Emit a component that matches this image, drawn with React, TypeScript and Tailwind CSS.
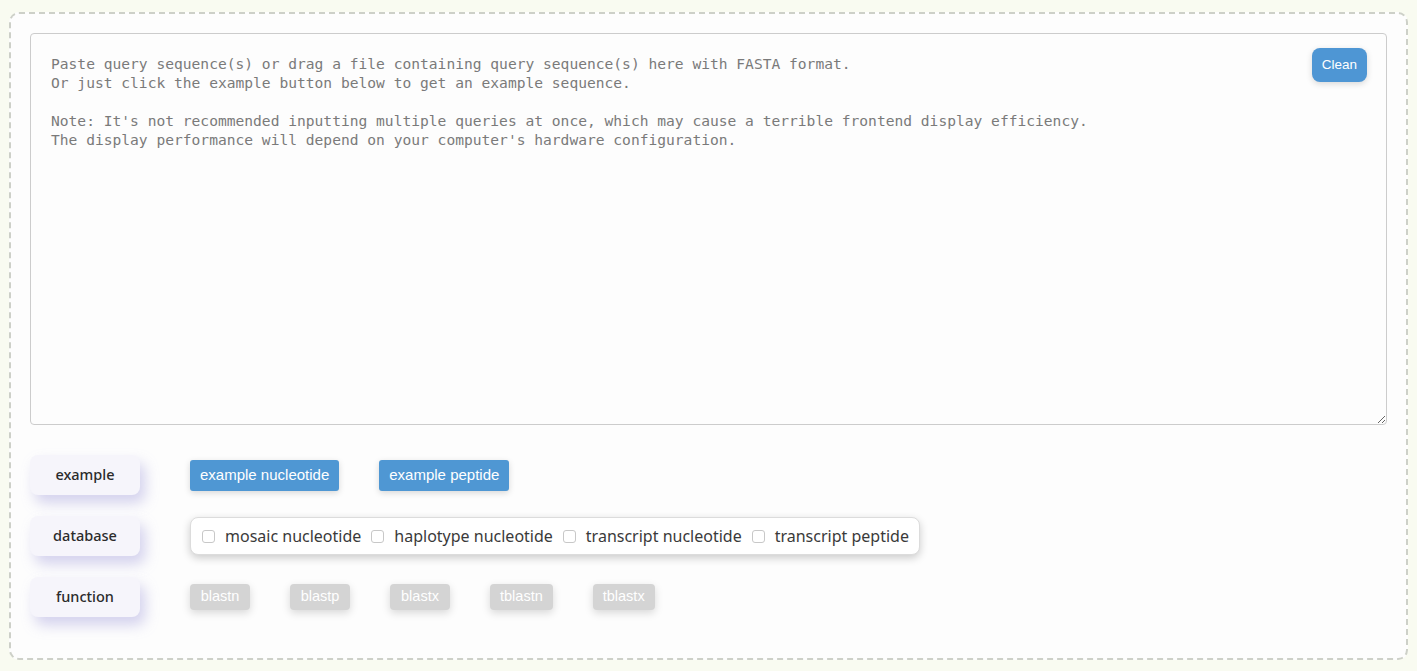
import React from 'react';

const placeholder =
  "Paste query sequence(s) or drag a file containing query sequence(s) here with FASTA format.\nOr just click the example button below to get an example sequence.\n\nNote: It's not recommended inputting multiple queries at once, which may cause a terrible frontend display efficiency.\nThe display performance will depend on your computer's hardware configuration.";

const Label = ({ children }: { children: React.ReactNode }) => (
  <div className="w-[110px] h-[40px] shrink-0 flex items-center justify-center rounded-lg bg-[#f6f5fb] text-[14.5px] font-medium text-[#2b2b2b] shadow-[5px_8px_14px_rgba(150,145,215,0.4)] [font-family:'Noto_Sans',sans-serif]">
    {children}
  </div>
);

const databases = ['mosaic nucleotide', 'haplotype nucleotide', 'transcript nucleotide', 'transcript peptide'];
const functions = ['blastn', 'blastp', 'blastx', 'tblastn', 'tblastx'];

export default function App() {
  return (
    <div className="min-h-[671px] bg-[#f9fbf1] pt-[12px] px-[9px] pb-[11px] [font-family:'Liberation_Sans',Arial,sans-serif]">
      <div className="h-[648px] rounded-[10px] border-2 border-dashed border-[#cdd0c8] bg-[#fdfdfd] px-[19px] pt-[19px]">
        <div className="relative">
          <textarea
            placeholder={placeholder}
            className="block w-full h-[392px] resize-y rounded-[4px] border border-[#cccccc] bg-[#fdfdfd] px-[20px] pt-[20px] text-[14.6px] leading-[19px] outline-none placeholder:text-[#7a7a7a] [font-family:'DejaVu_Sans_Mono',monospace]"
          />
          <button className="absolute right-[20px] top-[15px] h-[34px] w-[55px] rounded-[8px] bg-[#4e96d4] text-[13.5px] text-white shadow-[0_2px_6px_rgba(0,0,0,0.15)]">
            Clean
          </button>
        </div>

        <div className="mt-[30px] flex flex-col gap-[21px]">
          <div className="flex items-center gap-[50px]">
            <Label>example</Label>
            <div className="flex gap-[40px]">
              <button className="flex h-[31px] items-center rounded-[3px] bg-[#4f97d3] px-[10px] text-[15px] text-white shadow-[0_2px_6px_rgba(0,0,0,0.15)]">
                example nucleotide
              </button>
              <button className="flex h-[31px] items-center rounded-[3px] bg-[#4f97d3] px-[10px] text-[15px] text-white shadow-[0_2px_6px_rgba(0,0,0,0.15)]">
                example peptide
              </button>
            </div>
          </div>

          <div className="flex items-center gap-[50px]">
            <Label>database</Label>
            <div className="flex h-[38px] items-center rounded-lg border border-[#dcdcdc] bg-white pl-[11px] pr-[10px] shadow-[0_3px_8px_rgba(0,0,0,0.2)] [font-family:'Noto_Sans',sans-serif]">
              {databases.map((d) => (
                <label key={d} className="mr-[10px] flex items-center last:mr-0">
                  <span className="mr-[10px] h-[13px] w-[13px] rounded-[3px] border border-[#c8c8c8] bg-white" />
                  <span className="text-[16px] text-[#3a3a3a]">{d}</span>
                </label>
              ))}
            </div>
          </div>

          <div className="flex items-center gap-[50px]">
            <Label>function</Label>
            <div className="flex gap-[40px]">
              {functions.map((f) => (
                <button
                  key={f}
                  className="flex h-[26px] min-w-[60px] items-center justify-center rounded-[4px] bg-[#d4d4d4] px-[10px] text-[14.5px] text-white shadow-[0_3px_8px_rgba(0,0,0,0.15)]"
                >
                  {f}
                </button>
              ))}
            </div>
          </div>
        </div>
      </div>
    </div>
  );
}
